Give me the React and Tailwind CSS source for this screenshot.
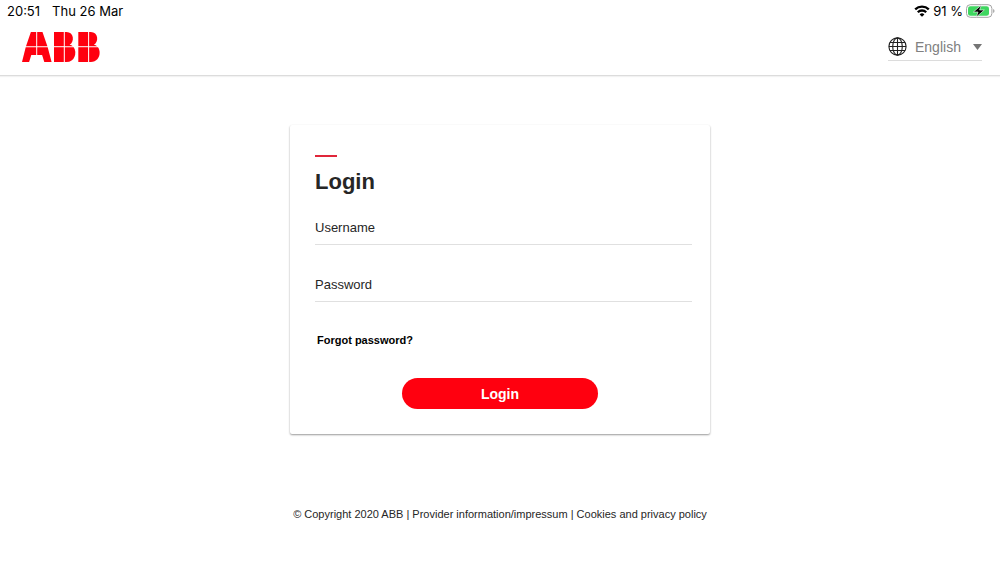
function StatusBar() {
  return (
    <div className="flex h-[22px] items-center justify-between pl-[7px] pr-[5px] font-['Inter',sans-serif] text-[13px] leading-4 text-black">
      <div className="flex gap-3">
        <span>20:51</span>
        <span>Thu 26 Mar</span>
      </div>
      <div className="flex items-center gap-[3px]">
        <svg className="h-3 w-4" viewBox="0 0 16 12" fill="none" stroke="black" strokeWidth="2.3" aria-hidden="true">
          <path d="M1.2 4.3a9.8 9.8 0 0 1 13.6 0" />
          <path d="M3.8 7.2a6 6 0 0 1 8.4 0" />
          <path d="M8 11.8 5.6 9.4a3.4 3.4 0 0 1 4.8 0Z" fill="black" stroke="none" />
        </svg>
        <span>91 %</span>
        <svg className="h-[14px] w-[29px]" viewBox="0 0 29 14" aria-hidden="true">
          <rect x="0.5" y="0.7" width="25.4" height="12.6" rx="3.8" fill="white" stroke="#a3a3a3" />
          <rect x="2" y="2.2" width="21" height="9.6" rx="2.4" fill="#3ed65f" />
          <path d="M27.3 5c1.5.6 1.5 3.4 0 4Z" fill="#8c8c8c" />
          <path d="M15.2 1.2 7.4 8h4.6l-1.7 5 8-7h-4.7Z" fill="black" stroke="white" strokeWidth="0.6" />
        </svg>
      </div>
    </div>
  );
}

function Logo() {
  return (
    <svg className="h-[30px] w-[78px]" viewBox="0 0 78 30" fill="#ff000f" role="img" aria-label="ABB">
      <path d="M8.9 0H14.2V14.2H4Z" />
      <path d="M15.2 0H20.5L25.4 14.2H15.2Z" />
      <path d="M3.7 15.2H14.2V23H9.3L7.1 30H0Z" />
      <path d="M15.2 15.2H25.7L29.6 30H22.3L20.1 23H15.2Z" />
      <path d="M32 0H41.8V14.2H32Z" />
      <path d="M42.8 0H44.5C52 0 52.8 10 47.6 12.8C49 13 50 13.6 50.8 14.2H42.8Z" />
      <path d="M32 15.2H41.8V30H32Z" />
      <path d="M42.8 15.2H51.7C55.5 21 52.5 30 44.5 30H42.8Z" />
      <path d="M56.3 0H66.1V14.2H56.3Z" />
      <path d="M67.1 0H68.8C76.3 0 77.1 10 71.9 12.8C73.3 13 74.3 13.6 75.1 14.2H67.1Z" />
      <path d="M56.3 15.2H66.1V30H56.3Z" />
      <path d="M67.1 15.2H76C79.8 21 76.8 30 68.8 30H67.1Z" />
    </svg>
  );
}

function LanguageSelect() {
  return (
    <div className="flex h-[27px] items-center border-b border-[#dcdcdc]">
      <label htmlFor="language" aria-label="Language">
        <svg className="size-[19px]" viewBox="0 0 19 19" fill="none" stroke="#1f1f1f" strokeWidth="1.1" aria-hidden="true">
          <circle cx="9.5" cy="9.5" r="8.6" />
          <ellipse cx="9.5" cy="9.5" rx="4.8" ry="8.6" />
          <path d="M9.5 1v17M1 9.5h17M2 5.5h15M2 13.5h15" />
        </svg>
      </label>
      <div className="grid items-center">
        <select
          id="language"
          className="col-start-1 row-start-1 w-[75px] appearance-none bg-transparent pl-2 text-sm text-[#808080] outline-none"
        >
          <option>English</option>
        </select>
        <svg
          className="pointer-events-none col-start-1 row-start-1 h-[6px] w-[9px] justify-self-end"
          viewBox="0 0 9 6"
          fill="#757575"
          aria-hidden="true"
        >
          <path d="M0 0H9L4.5 6Z" />
        </svg>
      </div>
    </div>
  );
}

function Field({ id, label, type }) {
  return (
    <div className="grid items-center border-b border-[#e0e0e0]">
      <input
        id={id}
        type={type}
        placeholder=" "
        className="peer col-start-1 row-start-1 h-8 w-full bg-transparent text-[13px] text-[#262626] outline-none"
      />
      <label
        htmlFor={id}
        className="invisible col-start-1 row-start-1 cursor-text text-[13px] leading-4 text-[#262626] peer-placeholder-shown:visible"
      >
        {label}
      </label>
    </div>
  );
}

export default function App() {
  return (
    <div className="flex min-h-screen flex-col bg-white font-['Liberation_Sans',Arial,sans-serif] text-[#262626]">
      <StatusBar />
      <header className="flex h-[54px] items-center justify-between border-b border-[#dcdcdc] pr-[18px] pb-[3px] pl-[22px] shadow-[0_1px_1px_rgba(0,0,0,0.05)]">
        <Logo />
        <LanguageSelect />
      </header>
      <main className="flex flex-col items-center px-4 pt-[49px]">
        <form className="flex w-full max-w-[420px] flex-col rounded-xs bg-white pt-[30px] pr-[18px] pb-[25px] pl-[25px] shadow-[0_1px_2px_rgba(0,0,0,0.4)]">
          <div className="h-[2px] w-[22px] bg-[#e0263a]" />
          <h1 className="mt-[11px] text-[22px] leading-7 font-bold">Login</h1>
          <div className="mt-4 flex flex-col gap-6">
            <Field id="username" label="Username" type="text" />
            <Field id="password" label="Password" type="password" />
          </div>
          <a href="#forgot" className="mt-[30px] self-start pl-[2px] text-[11px] leading-4 font-bold text-black">
            Forgot password?
          </a>
          <button type="button" className="mt-[30px] mr-[7px] h-[31px] w-[196px] self-center rounded-full bg-[#ff000f] text-sm font-bold text-white">
            Login
          </button>
        </form>
      </main>
      <footer className="mt-[72px] text-center text-[11px] leading-4">
        © Copyright 2020 ABB | <a href="#provider">Provider information/impressum</a> |{" "}
        <a href="#privacy">Cookies and privacy policy</a>
      </footer>
    </div>
  );
}
